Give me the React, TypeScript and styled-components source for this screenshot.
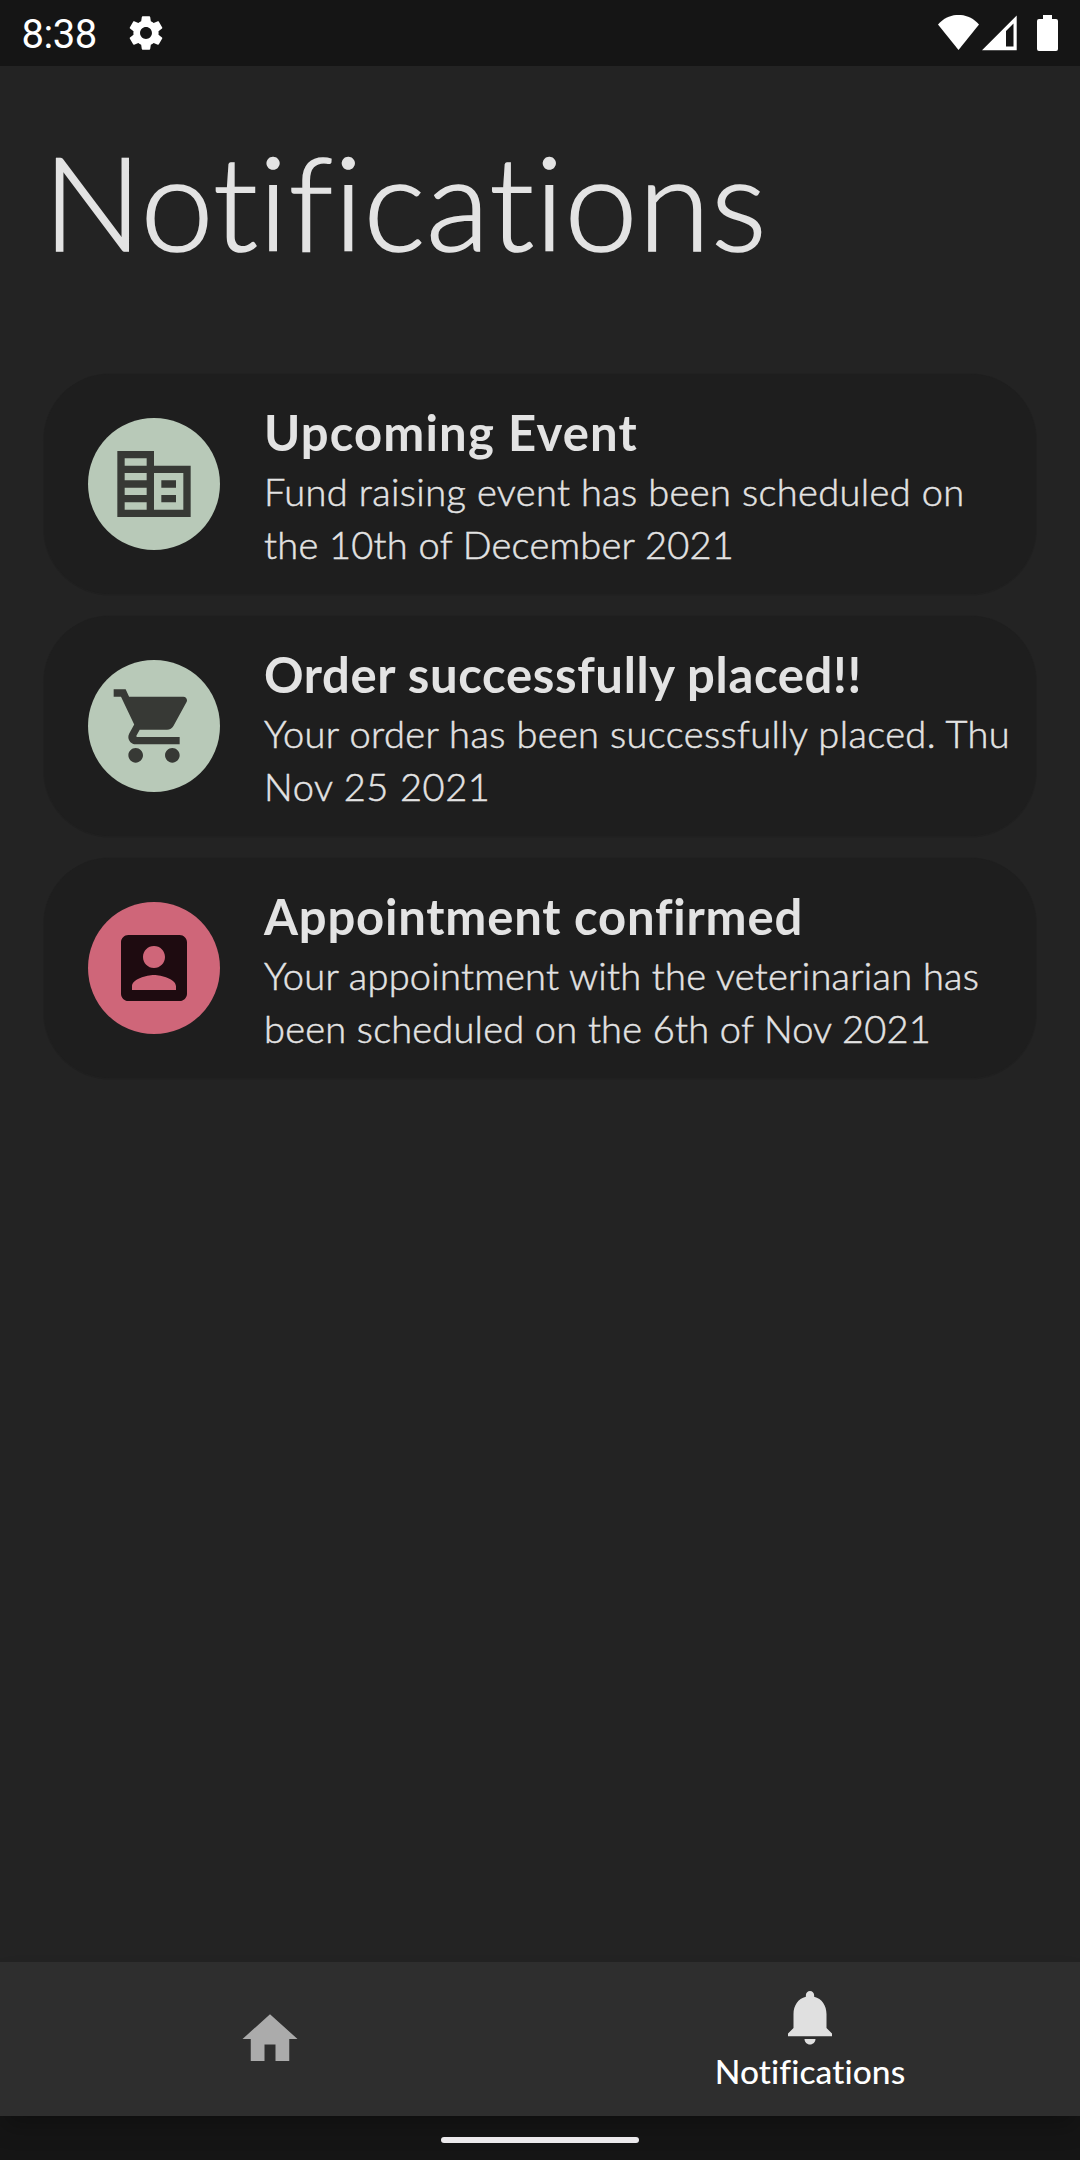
import React from "react";
import styled, { createGlobalStyle } from "styled-components";

const GlobalStyle = createGlobalStyle`
  * { box-sizing: border-box; }
  body { margin: 0; background: #232323; }
`;

const Screen = styled.div`
  display: flex;
  flex-direction: column;
  height: 2160px;
  width: 1080px;
  overflow: hidden;
  background: #232323;
  color: #e3e3e3;
  font-family: Lato, "Noto Sans", sans-serif;
  font-variant-ligatures: none;
`;

const StatusBar = styled.header`
  display: flex;
  align-items: center;
  height: 66px;
  flex: none;
  padding: 0 22px 0 21.5px;
  background: #151515;
  color: #fff;
`;

const Clock = styled.span`
  width: 103px;
  font: 400 40px/66px Roboto, sans-serif;
  letter-spacing: -0.45px;
  padding-top: 3px;
`;

const StatusIcons = styled.div`
  display: flex;
  align-items: center;
  margin-left: auto;
`;

const Glyph = styled.svg<{ $gap?: number }>`
  display: block;
  fill: currentColor;
  margin-left: ${(p) => p.$gap ?? 0}px;
`;

const Content = styled.main`
  flex: 1;
  min-height: 0;
  padding: 45px 44px 0 43px;
`;

const Heading = styled.h1`
  margin: 0 0 83px;
  font-size: 131px;
  line-height: 180px;
  font-weight: 300;
  letter-spacing: 0.65px;
  white-space: nowrap;
  -webkit-text-stroke: 1.6px currentColor;
`;

const List = styled.ul`
  display: flex;
  flex-direction: column;
  gap: 22px;
  margin: 0 0 0 1px;
  padding: 0;
  list-style: none;
`;

const Card = styled.li`
  display: flex;
  align-items: center;
  gap: 44px;
  height: 220px;
  padding-left: 44px;
  border-radius: 66px;
  background: #1e1e1e;
  box-shadow: 0 0.5px 0 1px #202020;
`;

const Avatar = styled.div<{ $bg: string; $fg: string }>`
  display: grid;
  place-items: center;
  flex: none;
  width: 132px;
  height: 132px;
  border-radius: 50%;
  background: ${(p) => p.$bg};
  color: ${(p) => p.$fg};
`;

const Texts = styled.div`
  flex: 1;
  white-space: nowrap;
`;

const CardTitle = styled.h2<{ $track: number }>`
  margin: 0;
  padding-top: 1px;
  height: 67px;
  font-size: 49px;
  line-height: 67px;
  font-weight: 700;
  letter-spacing: ${(p) => p.$track}px;
`;

const Line = styled.span<{ $track: number }>`
  display: block;
  font-size: 38px;
  line-height: 53px;
  font-weight: 300;
  letter-spacing: ${(p) => p.$track}px;
  -webkit-text-stroke: 0.5px currentColor;
`;

const NavBar = styled.nav`
  display: grid;
  grid-template-columns: 1fr 1fr;
  flex: none;
  height: 154px;
  background: #2e2e2e;
  box-shadow: 0 14px 22px -4px rgba(0, 0, 0, 0.25);
  z-index: 1;
`;

const Tab = styled.a<{ $active?: boolean }>`
  display: flex;
  flex-direction: column;
  align-items: center;
  justify-content: ${(p) => (p.$active ? "flex-start" : "center")};
  padding-top: ${(p) => (p.$active ? 22 : 0)}px;
  color: ${(p) => (p.$active ? "#e0e0e0" : "#ababab")};
`;

const TabLabel = styled.span`
  color: #fff;
  font-size: 33.5px;
  line-height: 42px;
  font-weight: 500;
  letter-spacing: 0.1px;
`;

const GestureArea = styled.footer`
  display: flex;
  justify-content: center;
  flex: none;
  height: 44px;
  padding-top: 21px;
  background: #151515;
`;

const Handle = styled.div`
  position: relative;
  z-index: 2;
  width: 198px;
  height: 6px;
  border-radius: 3px;
  background: #ebe9ec;
`;

const icons = {
  business:
    "M2 3h10v4h10v14H2V3zM4 5v2h6V5H4zM4 9v2h6V9H4zM4 13v2h6v-2H4zM4 17v2h6v-2H4zM12 9v10h8V9h-8zM14 11h4v2h-4zM14 15h4v2h-4z",
  cart:
    "M7 18c-1.1 0-1.99.9-1.99 2S5.9 22 7 22s2-.9 2-2-.9-2-2-2zM1 2v2h2l3.6 7.59-1.35 2.45c-.16.28-.25.61-.25.96 0 1.1.9 2 2 2h12v-2H7.42c-.14 0-.25-.11-.25-.25l.03-.12.9-1.63h7.45c.75 0 1.41-.41 1.75-1.03l3.58-6.49c.08-.14.12-.31.12-.48 0-.55-.45-1-1-1H5.21l-.94-2H1zm16 16c-1.1 0-1.99.9-1.99 2s.89 2 1.99 2 2-.9 2-2-.9-2-2-2z",
  account:
    "M3 5v14c0 1.1.89 2 2 2h14c1.1 0 2-.9 2-2V5c0-1.1-.9-2-2-2H5c-1.11 0-2 .9-2 2zm12 4c0 1.66-1.34 3-3 3s-3-1.34-3-3 1.34-3 3-3 3 1.34 3 3zm-9 8c0-2 4-3.1 6-3.1s6 1.1 6 3.1v1H6v-1z",
  home: "M10 20v-6h4v6h5v-8h3L12 3 2 12h3v8z",
  bell:
    "M12 22c1.1 0 2-.9 2-2h-4c0 1.1.89 2 2 2zm6-6v-5c0-3.07-1.64-5.64-4.5-6.32V4c0-.83-.67-1.5-1.5-1.5s-1.5.67-1.5 1.5v.68C7.63 5.36 6 7.92 6 11v5l-2 2v1h16v-1l-2-2z",
  gear:
    "M19.14 12.94c.04-.3.06-.61.06-.94 0-.32-.02-.64-.07-.94l2.03-1.58c.18-.14.23-.41.12-.61l-1.92-3.32c-.12-.22-.37-.29-.59-.22l-2.39.96c-.5-.38-1.03-.7-1.62-.94l-.36-2.54c-.04-.24-.24-.41-.48-.41h-3.84c-.24 0-.43.17-.47.41l-.36 2.54c-.59.24-1.13.57-1.62.94l-2.39-.96c-.22-.08-.47 0-.59.22L2.74 8.87c-.12.21-.08.47.12.61l2.03 1.58c-.05.3-.09.63-.09.94s.02.64.07.94l-2.03 1.58c-.18.14-.23.41-.12.61l1.92 3.32c.12.22.37.29.59.22l2.39-.96c.5.38 1.03.7 1.62.94l.36 2.54c.05.24.24.41.48.41h3.84c.24 0 .44-.17.47-.41l.36-2.54c.59-.24 1.13-.56 1.62-.94l2.39.96c.22.08.47 0 .59-.22l1.92-3.32c.12-.22.07-.47-.12-.61l-2.01-1.58zM12 15.4c-1.88 0-3.4-1.52-3.4-3.4s1.52-3.4 3.4-3.4 3.4 1.52 3.4 3.4-1.52 3.4-3.4 3.4z",
};

const Icon = ({ name, size }: { name: keyof typeof icons; size: number }) => (
  <Glyph width={size} height={size} viewBox="0 0 24 24">
    <path d={icons[name]} fillRule={name === "business" ? "evenodd" : "nonzero"} />
  </Glyph>
);

type Notice = {
  icon: keyof typeof icons;
  bg: string;
  fg: string;
  title: string;
  track: number;
  lines: [string, number][];
};

const notices: Notice[] = [
  {
    icon: "business",
    bg: "#b8c9b8",
    fg: "#373935",
    title: "Upcoming Event",
    track: 1.15,
    lines: [
      ["Fund raising event has been scheduled on", 0.37],
      ["the 10th of December 2021", 0.24],
    ],
  },
  {
    icon: "cart",
    bg: "#b8c9b8",
    fg: "#373935",
    title: "Order successfully placed!!",
    track: 0.65,
    lines: [
      ["Your order has been successfully placed. Thu", 0.38],
      ["Nov 25 2021", 0.6],
    ],
  },
  {
    icon: "account",
    bg: "#cf6679",
    fg: "#1e0b10",
    title: "Appointment confirmed",
    track: 0.8,
    lines: [
      ["Your appointment with the veterinarian has", 0.24],
      ["been scheduled on the 6th of Nov 2021", 0.2],
    ],
  },
];

export default function App() {
  return (
    <Screen>
      <GlobalStyle />
      <StatusBar>
        <Clock>8:38</Clock>
        <Icon name="gear" size={42} />
        <StatusIcons>
          <Glyph width={41} height={36} viewBox="0 0 41 36">
            <path d="M0 9.5C11-3.3 30-3.3 41 9.5L20.5 35z" />
          </Glyph>
          <Glyph $gap={3} width={35} height={36} viewBox="0 0 35 36">
            <path fillRule="evenodd" d="M34.7.5V35.2H0zM24 16v15.5h7.5V8.5z" />
          </Glyph>
          <Glyph $gap={20} width={21} height={36} viewBox="0 0 21 36">
            <path d="M6 0h9v4h4q2 0 2 2v28q0 2-2 2H2q-2 0-2-2V6q0-2 2-2h4z" />
          </Glyph>
        </StatusIcons>
      </StatusBar>
      <Content>
        <Heading>Notifications</Heading>
        <List>
          {notices.map((n) => (
            <Card key={n.icon}>
              <Avatar $bg={n.bg} $fg={n.fg}>
                <Icon name={n.icon} size={88} />
              </Avatar>
              <Texts>
                <CardTitle $track={n.track}>{n.title}</CardTitle>
                {n.lines.map(([text, track]) => (
                  <Line key={text} $track={track}>
                    {text}
                  </Line>
                ))}
              </Texts>
            </Card>
          ))}
        </List>
      </Content>
      <NavBar>
        <Tab>
          <Icon name="home" size={66} />
        </Tab>
        <Tab $active>
          <Icon name="bell" size={66} />
          <TabLabel>Notifications</TabLabel>
        </Tab>
      </NavBar>
      <GestureArea>
        <Handle />
      </GestureArea>
    </Screen>
  );
}
